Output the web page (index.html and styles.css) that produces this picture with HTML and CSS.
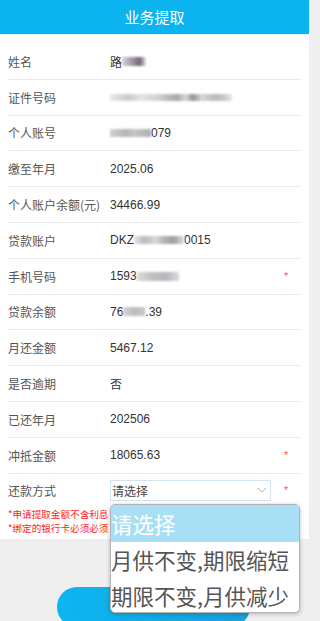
FILE: index.html
```html
<!DOCTYPE html>
<html lang="zh">
<head>
<meta charset="utf-8">
<title>业务提取</title>
<link rel="stylesheet" href="styles.css">
</head>
<body>
<header class="header">业务提取</header>
<main class="form">
  <div class="row"><span class="label">姓名</span><span class="value">路<span class="blur blur-name"></span></span></div>
  <div class="row"><span class="label">证件号码</span><span class="value"><span class="blur blur-id"></span></span></div>
  <div class="row"><span class="label">个人账号</span><span class="value"><span class="blur blur-acc"></span>079</span></div>
  <div class="row"><span class="label">缴至年月</span><span class="value">2025.06</span></div>
  <div class="row"><span class="label">个人账户余额(元)</span><span class="value">34466.99</span></div>
  <div class="row"><span class="label">贷款账户</span><span class="value">DKZ<span class="blur blur-loan"></span>0015</span></div>
  <div class="row"><span class="label">手机号码</span><span class="value">1593<span class="blur blur-phone"></span></span><span class="star">*</span></div>
  <div class="row"><span class="label">贷款余额</span><span class="value">76<span class="blur blur-bal"></span>.39</span></div>
  <div class="row"><span class="label">月还金额</span><span class="value">5467.12</span></div>
  <div class="row"><span class="label">是否逾期</span><span class="value">否</span></div>
  <div class="row"><span class="label">已还年月</span><span class="value">202506</span></div>
  <div class="row"><span class="label">冲抵金额</span><span class="value">18065.63</span><span class="star">*</span></div>
  <div class="row row-last"><span class="label">还款方式</span>
    <div class="select"><span>请选择</span>
      <svg class="chev" width="10" height="6" viewBox="0 0 10 6"><path d="M1 1 L5 5 L9 1" fill="none" stroke="#b5b5b5" stroke-width="1"/></svg>
    </div>
    <span class="star">*</span>
  </div>
  <div class="notes">
    <p>*申请提取金额不含利息</p>
    <p>*绑定的银行卡必须必须</p>
  </div>
</main>
<div class="actions"><button class="btn" aria-label="提交"></button></div>
<div class="dropdown">
  <div class="opt opt-active">请选择</div>
  <div class="opt">月供不变,期限缩短</div>
  <div class="opt">期限不变,月供减少</div>
</div>
</body>
</html>
```
FILE: styles.css
```css
html, body {
  margin: 0;
  padding: 0;
}
body {
  background: #efefef;
  font-family: "Liberation Sans", "Noto Sans CJK SC", sans-serif;
  width: 309px;
  height: 621px;
  overflow: hidden;
  position: relative;
}
.header {
  height: 34px;
  line-height: 34px;
  background: #0bb4ef;
  color: #fff;
  text-align: center;
  font-size: 15px;
  font-family: "Noto Sans CJK SC", sans-serif;
  border-bottom: 1px solid #e6f6fd;
}
.form {
  background: #fff;
  padding: 9px 8px 4px;
}
.row {
  display: flex;
  align-items: center;
  height: 34.8px;
  border-bottom: 1px solid #ebebeb;
  font-size: 12px;
}
.label {
  width: 102px;
  color: #555;
  font-family: "Noto Sans CJK SC", sans-serif;
}
.value {
  flex: 1;
  color: #333;
  display: flex;
  align-items: center;
}
.star {
  color: #f5603f;
  font-size: 11px;
  width: 8px;
  margin-right: 9px;
}
.blur {
  display: inline-block;
  height: 8px;
  filter: blur(1.2px);
}
.blur-name {
  width: 24px;
  height: 9px;
  background: linear-gradient(90deg, #d9d2dd, #a69aa8 40%, #706a70 75%, #e8e8e8);
}
.blur-id {
  width: 122px;
  height: 7px;
  background: linear-gradient(90deg, #e9e9ea 0%, #c8cad0 15%, #e4e4e6 25%, #cfd1d6 40%, #a8a6a8 55%, #d8d8da 62%, #8f939c 68%, #d6d6d8 75%, #c2b9b5 85%, #bfc3c9 92%, #e8e8e8 100%);
}
.blur-acc {
  width: 41px;
  height: 8px;
  background: linear-gradient(90deg, #d0d0d2, #b5b5b8 40%, #c6c6c8 60%, #aeaeb0);
}
.blur-loan {
  width: 50px;
  height: 8px;
  background: linear-gradient(90deg, #e4e4e6, #b9bcc4 20%, #d6d6d8 45%, #b0b2b8 60%, #9c9ea2 80%, #e0e0e0);
}
.blur-phone {
  width: 42px;
  height: 9px;
  background: linear-gradient(90deg, #dcdcde, #c0c0c4 35%, #b5b6bb 70%, #dddddf);
}
.blur-bal {
  width: 22px;
  height: 9px;
  background: linear-gradient(90deg, #d6d6d8, #bcbcbf 50%, #c9c9cb);
}
.row-last {
  border-bottom: none;
  height: 33px;
}
.select {
  width: 161px;
  height: 21px;
  box-sizing: border-box;
  border: 1px solid #d3e2ef;
  display: flex;
  align-items: center;
  justify-content: space-between;
  padding: 0 3px 0 1px;
  color: #444;
  font-family: "Noto Sans CJK SC", sans-serif;
  margin-right: 13px;
}
.notes {
  font-size: 9.6px;
  line-height: 14px;
  color: #f22;
  font-family: "Noto Sans CJK SC", sans-serif;
  white-space: nowrap;
}
.notes p {
  margin: 0;
}
.actions {
  padding-top: 48px;
  padding-left: 57px;
}
.btn {
  display: block;
  width: 193px;
  height: 40px;
  border: none;
  border-radius: 20px;
  background: linear-gradient(90deg, #0bb6f0, #1aa0da);
}
.dropdown {
  position: absolute;
  left: 110px;
  top: 504px;
  width: 190px;
  height: 109px;
  box-sizing: border-box;
  background: #fff;
  border: 1px solid #b4b4b4;
  border-radius: 5px;
  box-shadow: 0 1px 4px rgba(0, 0, 0, 0.25);
  overflow: hidden;
}
.opt {
  height: 36px;
  line-height: 36px;
  font-size: 21.5px;
  color: #555;
  white-space: nowrap;
  font-family: "Noto Sans CJK SC", sans-serif;
}
.opt-active {
  background: #a9dff4;
  color: #fff;
  height: 37px;
  line-height: 37px;
}
```
